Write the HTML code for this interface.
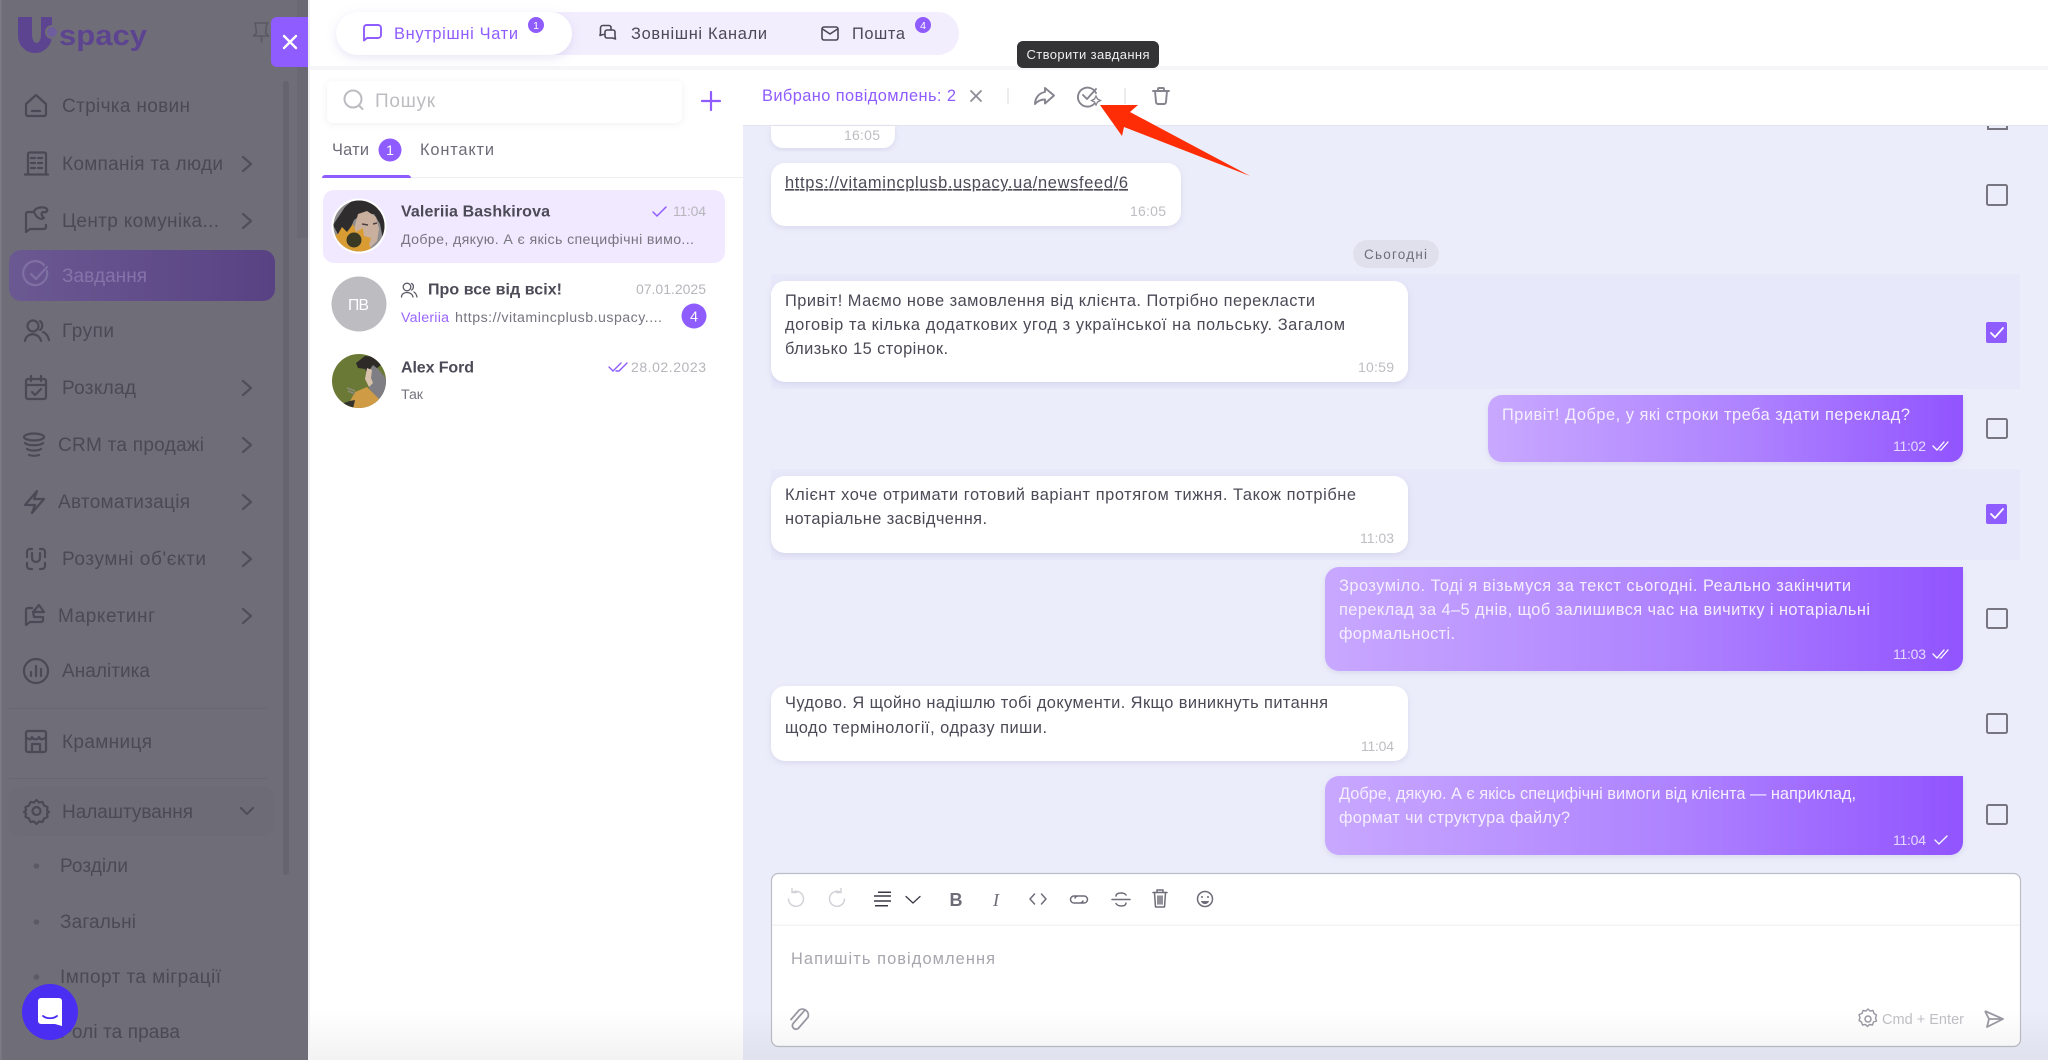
<!DOCTYPE html>
<html lang="uk"><head><meta charset="utf-8"><title>Uspacy</title>
<style>
html,body{margin:0;padding:0;width:2048px;height:1060px;overflow:hidden;background:#fff}
svg{display:block;font-family:"Liberation Sans","Noto Sans CJK JP",sans-serif}
.nav{font-size:19px;fill:#4b4955}
.ic{fill:none;stroke:#4b4955;stroke-width:2.2;stroke-linecap:round;stroke-linejoin:round}
.m{font-size:16.4px;fill:#4c4a56}
.w{font-size:16.4px;fill:#f4eeff}
.t{font-size:14px;fill:#bdbdc3}
.tw{font-size:14px;fill:#e6d9ff}
.g{fill:none;stroke:#85838e;stroke-width:1.9;stroke-linecap:round;stroke-linejoin:round}
.tb{fill:none;stroke:#6e6c78;stroke-width:1.5;stroke-linecap:round;stroke-linejoin:round}
</style></head><body>
<svg width="2048" height="1060" viewBox="0 0 2048 1060" xmlns="http://www.w3.org/2000/svg">
<defs>
<linearGradient id="act" x1="0" x2="1" y1="0" y2="0"><stop offset="0" stop-color="#6b5992"/><stop offset="1" stop-color="#594283"/></linearGradient>
<linearGradient id="out" x1="0" x2="1" y1="0" y2="0"><stop offset="0" stop-color="#c8a8ff"/><stop offset=".55" stop-color="#ae82ff"/><stop offset="1" stop-color="#9154ff"/></linearGradient>
<linearGradient id="fade" x1="0" x2="0" y1="0" y2="1"><stop offset="0" stop-color="#000" stop-opacity="0"/><stop offset="1" stop-color="#000" stop-opacity=".05"/></linearGradient>
<filter id="s1" x="-10%" y="-30%" width="120%" height="170%"><feDropShadow dx="0" dy="3" stdDeviation="5" flood-color="#8f7fd0" flood-opacity=".2"/></filter>
<filter id="s2" x="-5%" y="-10%" width="110%" height="125%"><feDropShadow dx="0" dy="2" stdDeviation="3" flood-color="#8a8cc0" flood-opacity=".2"/></filter>
<filter id="s3" x="-5%" y="-20%" width="110%" height="150%"><feDropShadow dx="0" dy="1" stdDeviation="3" flood-color="#60607a" flood-opacity=".1"/></filter>
<clipPath id="a1"><circle cx="359" cy="226" r="25.5"/></clipPath>
<clipPath id="a3"><circle cx="359" cy="381" r="27"/></clipPath>
</defs>

<!-- base -->
<rect width="2048" height="1060" fill="#fff"/>
<rect x="308" y="66" width="1740" height="4" fill="#f6f6f8"/>
<rect x="743" y="70" width="1305" height="990" fill="#ebedfa"/>
<rect x="743" y="70" width="1305" height="56" fill="#fff"/>
<rect x="743" y="125" width="1305" height="1" fill="#e4e4ee"/>
<rect x="308" y="0" width="2" height="1060" fill="#f1f1f6"/>

<!-- top tabs -->
<rect x="336" y="12" width="623" height="43" rx="21" fill="#f2eefd"/>
<rect x="336" y="12" width="236" height="43" rx="21.5" fill="#fff" filter="url(#s1)"/>
<path d="M366 25h12a3 3 0 0 1 3 3v7a3 3 0 0 1-3 3h-11l-3 2.500v-12.500a3 3 0 0 1 2-3z" fill="none" stroke="#8f5cff" stroke-width="1.900" stroke-linejoin="round"/>
<text x="394" y="39" font-size="16.4" fill="#8f5cff" textLength="124">Внутрішні Чати</text>
<circle cx="536" cy="25" r="8" fill="#8f5cff"/><text x="536" y="29" font-size="10.500" fill="#fff" text-anchor="middle">1</text>
<g fill="none" stroke="#4c4a56" stroke-width="1.600" stroke-linejoin="round" stroke-linecap="round">
<path d="M611 30v-2.500a2 2 0 0 0-2-2h-6a2.500 2.500 0 0 0-2.500 2.500v5l-.5 2.500 3-1h1"/>
<path d="M607 30h6a2 2 0 0 1 2 2v4.500l.5 2.500-3-1h-5.500a2 2 0 0 1-2-2V32a2 2 0 0 1 2-2z"/>
<rect x="822" y="27" width="16" height="13" rx="2"/><path d="M822.500 29l7.500 5 7.500-5"/>
</g>
<text x="631" y="39" font-size="16.4" fill="#4c4a56" textLength="136">Зовнішні Канали</text>
<text x="852" y="39" font-size="16.4" fill="#4c4a56" textLength="53">Пошта</text>
<circle cx="923" cy="25" r="8" fill="#8f5cff"/><text x="923" y="29" font-size="10.500" fill="#fff" text-anchor="middle">4</text>

<!-- chat list -->
<rect x="327" y="81" width="355" height="42" rx="6" fill="#fff" filter="url(#s3)"/>
<circle cx="353" cy="99" r="8.500" fill="none" stroke="#bcbcc1" stroke-width="2"/><path d="M359.500 106l3 3" stroke="#bcbcc1" stroke-width="2" stroke-linecap="round"/>
<text x="375" y="107" font-size="19" fill="#bcbcc1" textLength="60">Пошук</text>
<path d="M711 92v18M702 101h18" stroke="#8f5cff" stroke-width="2.200" stroke-linecap="round"/>
<text x="332" y="155" font-size="16.4" fill="#6e6c78" textLength="37">Чати</text>
<circle cx="390" cy="150" r="11.500" fill="#8f5cff"/><text x="390" y="155" font-size="14" fill="#fff" text-anchor="middle">1</text>
<text x="420" y="155" font-size="16.4" fill="#6e6c78" textLength="74">Контакти</text>
<rect x="322" y="177" width="421" height="1" fill="#eeeef2"/>
<path d="M322 178a3 3 0 0 1 3-3h83a3 3 0 0 1 3 3z" fill="#8f5cff"/>

<rect x="323" y="190" width="402" height="73" rx="11" fill="#f1e9ff"/>
<circle cx="359" cy="226" r="27.500" fill="#fff"/>
<g clip-path="url(#a1)">
<rect x="330" y="198" width="60" height="56" fill="#8d8c8e"/>
<path d="M333 225l12-18 8-7 30 0 8 12v30l-6 8-5-26-6-10-12 0-8 6-6 14-8 4z" fill="#2f2c2d"/>
<path d="M358 214l9-3 9 6 3 12-2 12-8 8-9-6-6-14z" fill="#c9b09e"/>
<path d="M362 224l6 1M373 224l4-1" stroke="#4d4040" stroke-width="1.600"/>
<path d="M331 236l7-2 4-7 5 5 6-8 3 8 7-4 1 8 7 2-2 7 4 6-5 5-3 6h-26l-6-6-4-10z" fill="#d99c33"/>
<circle cx="354" cy="240" r="7.500" fill="#3a3a24"/>
</g>
<text x="401" y="216.500" font-size="16" font-weight="700" fill="#4c4a56" textLength="149">Valeriia Bashkirova</text>
<path d="M653 212l4 4 9-9" fill="none" stroke="#8f5cff" stroke-width="1.500" stroke-linecap="round"/>
<text x="673" y="216" font-size="14" fill="#b6b6bc" textLength="33">11:04</text>
<text x="401" y="244" font-size="14.2" fill="#77757f" textLength="293">Добре, дякую. А є якісь специфічні вимо...</text>

<circle cx="359" cy="304" r="27.500" fill="#bdbcc1"/>
<text x="348" y="310" font-size="15.7" fill="#fff" textLength="21">ПВ</text>
<g fill="none" stroke="#5c5a66" stroke-width="1.300" stroke-linecap="round"><circle cx="407" cy="287" r="3.800"/><path d="M401.500 297c0-6 10.500-6 11.500 0M411.500 283.500c2.500 1 2.500 5 0 6.500M414 292c1.500 1 2.500 2.500 3 5"/></g>
<text x="428" y="294.500" font-size="16" font-weight="700" fill="#4c4a56" textLength="134">Про все від всіх!</text>
<text x="636" y="294" font-size="14" fill="#b6b6bc" textLength="70">07.01.2025</text>
<text x="401" y="322" font-size="14.2" fill="#9a66ff" textLength="48">Valeriia</text>
<text x="455" y="322" font-size="14.2" fill="#77757f" textLength="207">https://vitamincplusb.uspacy....</text>
<circle cx="694" cy="316" r="12.500" fill="#8f5cff"/><text x="694" y="321.500" font-size="14.5" fill="#fff" text-anchor="middle">4</text>

<circle cx="359" cy="381" r="27" fill="#6a7936"/>
<g clip-path="url(#a3)">
<path d="M356 363l9-7 13 1 3 8-4 3-4 10-5-3-3-6-7-1z" fill="#2d2a28"/>
<path d="M368 372l5-7 5 4 6 7 5 10 1 14-9 8-7-6-5-14z" fill="#7e7e84"/>
<path d="M367 368l5 2-1 8 2 5-4 4-4-8z" fill="#d9c2ab"/>
<path d="M355 392l12-5 6 6 6 6 6 6-2 8h-36l2-10z" fill="#cf9b45"/>
<path d="M344 403l6-2 5-1-3 13h-12z" fill="#33322c"/>
<path d="M347 388l8 3M348 391l7 3" stroke="#8c8c78" stroke-width="1.500"/>
</g>
<text x="401" y="372.500" font-size="16" font-weight="700" fill="#4c4a56" textLength="73">Alex Ford</text>
<path d="M609 367l4 4 8-8M616 371l3 0 8-8" fill="none" stroke="#8f5cff" stroke-width="1.400" stroke-linecap="round"/>
<text x="631" y="372" font-size="14" fill="#b6b6bc" textLength="75">28.02.2023</text>
<text x="401" y="399" font-size="14.2" fill="#77757f" textLength="22">Так</text>

<!-- chat header -->
<text x="762" y="101" font-size="16.4" fill="#8f5cff" textLength="194">Вибрано повідомлень: 2</text>
<path d="M971 91l10 10M981 91l-10 10" stroke="#8d8b95" stroke-width="1.800" stroke-linecap="round"/>
<rect x="1007" y="88" width="2" height="16" fill="#ececef"/>
<path class="g" d="M1045 88l9 7.500-9 8v-4c-4 0-7 1-10 4.500 0-6 4-11 10-12z"/>
<path class="g" d="M1096 93a9.500 9.500 0 1 0-2 11M1083 95l4 4 9-10"/>
<path d="M1096 96l1.500 3 3 1.500-3 1.500-1.500 3-1.500-3-3-1.500 3-1.500z" fill="none" stroke="#85838e" stroke-width="1.300"/>
<rect x="1124" y="88" width="2" height="16" fill="#ececef"/>
<path class="g" d="M1153 91h16M1158 91v-2a1 1 0 0 1 1-1h4a1 1 0 0 1 1 1v2M1155 91l1 11a2 2 0 0 0 2 2h6a2 2 0 0 0 2-2l1-11"/>

<!-- messages -->
<path d="M771 126h124v10a12 12 0 0 1-12 12H783a12 12 0 0 1-12-12z" fill="#fff" filter="url(#s2)"/>
<text x="844" y="140" class="t" textLength="36">16:05</text>
<path d="M1988 126v3h19v-3" fill="none" stroke="#77757f" stroke-width="2"/>

<rect x="771" y="163" width="410" height="63" rx="14" fill="#fff" filter="url(#s2)"/>
<text x="785" y="188" class="m" textLength="343" text-decoration="underline">https://vitamincplusb.uspacy.ua/newsfeed/6</text>
<text x="1130" y="216" class="t" textLength="36">16:05</text>
<rect x="1987" y="185" width="20" height="20" rx="1.500" fill="none" stroke="#77757f" stroke-width="2"/>

<rect x="1353" y="240" width="86" height="28" rx="14" fill="#dfe0ec"/>
<text x="1364" y="259" font-size="13.5" fill="#6e6c78" textLength="63">Сьогодні</text>

<rect x="771" y="274" width="1249" height="115" fill="#e7e8f9"/>
<rect x="771" y="281" width="637" height="101" rx="14" fill="#fff" filter="url(#s2)"/>
<text x="785" y="306" class="m" textLength="530">Привіт! Маємо нове замовлення від клієнта. Потрібно перекласти</text>
<text x="785" y="330" class="m" textLength="560">договір та кілька додаткових угод з української на польську. Загалом</text>
<text x="785" y="354" class="m" textLength="163">близько 15 сторінок.</text>
<text x="1358" y="372" class="t" textLength="36">10:59</text>
<rect x="1986" y="322" width="21" height="21" rx="2" fill="#8f5cff"/><path d="M1991 333l4 4 8-9" fill="none" stroke="#fff" stroke-width="1.800" stroke-linecap="round" stroke-linejoin="round"/>

<path d="M1502 395h461v54a13 13 0 0 1-13 13h-448a14 14 0 0 1-14-14v-39a14 14 0 0 1 14-14z" fill="url(#out)" filter="url(#s2)"/>
<text x="1502" y="420" class="w" textLength="408">Привіт! Добре, у які строки треба здати переклад?</text>
<text x="1893" y="451" class="tw" textLength="33">11:02</text>
<path d="M1933 446l4 4 7-8M1940 450l1 0 7-8" fill="none" stroke="#fff" stroke-width="1.300" stroke-linecap="round"/>
<rect x="1987" y="419" width="20" height="19" rx="1.500" fill="none" stroke="#77757f" stroke-width="2"/>

<rect x="771" y="469" width="1249" height="91" fill="#e7e8f9"/>
<rect x="771" y="476" width="637" height="77" rx="14" fill="#fff" filter="url(#s2)"/>
<text x="785" y="500" class="m" textLength="571">Клієнт хоче отримати готовий варіант протягом тижня. Також потрібне</text>
<text x="785" y="524" class="m" textLength="202">нотаріальне засвідчення.</text>
<text x="1360" y="543" class="t" textLength="34">11:03</text>
<rect x="1986" y="504" width="21" height="20" rx="2" fill="#8f5cff"/><path d="M1991 514l4 4 8-9" fill="none" stroke="#fff" stroke-width="1.800" stroke-linecap="round" stroke-linejoin="round"/>

<path d="M1339 567h624v91a13 13 0 0 1-13 13h-611a14 14 0 0 1-14-14v-76a14 14 0 0 1 14-14z" fill="url(#out)" filter="url(#s2)"/>
<text x="1339" y="591" class="w" textLength="512">Зрозуміло. Тоді я візьмуся за текст сьогодні. Реально закінчити</text>
<text x="1339" y="615" class="w" textLength="531">переклад за 4–5 днів, щоб залишився час на вичитку і нотаріальні</text>
<text x="1339" y="639" class="w" textLength="116">формальності.</text>
<text x="1893" y="659" class="tw" textLength="33">11:03</text>
<path d="M1933 654l4 4 7-8M1940 658l1 0 7-8" fill="none" stroke="#fff" stroke-width="1.300" stroke-linecap="round"/>
<rect x="1987" y="609" width="20" height="19" rx="1.500" fill="none" stroke="#77757f" stroke-width="2"/>

<rect x="771" y="686" width="637" height="75" rx="14" fill="#fff" filter="url(#s2)"/>
<text x="785" y="708" class="m" textLength="543">Чудово. Я щойно надішлю тобі документи. Якщо виникнуть питання</text>
<text x="785" y="733" class="m" textLength="262">щодо термінології, одразу пиши.</text>
<text x="1361" y="751" class="t" textLength="33">11:04</text>
<rect x="1987" y="714" width="20" height="19" rx="1.500" fill="none" stroke="#77757f" stroke-width="2"/>

<path d="M1339 776h624v66a13 13 0 0 1-13 13h-611a14 14 0 0 1-14-14v-51a14 14 0 0 1 14-14z" fill="url(#out)" filter="url(#s2)"/>
<text x="1339" y="799" class="w" textLength="517">Добре, дякую. А є якісь специфічні вимоги від клієнта — наприклад,</text>
<text x="1339" y="823" class="w" textLength="231">формат чи структура файлу?</text>
<text x="1893" y="845" class="tw" textLength="33">11:04</text>
<path d="M1935 840l4 4 8-8" fill="none" stroke="#fff" stroke-width="1.300" stroke-linecap="round"/>
<rect x="1987" y="805" width="20" height="19" rx="1.500" fill="none" stroke="#77757f" stroke-width="2"/>

<!-- composer -->
<rect x="771.500" y="873.500" width="1249" height="173" rx="7" fill="#fff" stroke="#bdbdc5" stroke-width="1.200"/>
<rect x="772" y="924.500" width="1248" height="1.500" fill="#f3f3f6"/>
<g fill="none" stroke="#d2d2d8" stroke-width="1.500" stroke-linecap="round" stroke-linejoin="round">
<path d="M792 892.500A7.500 7.500 0 1 1 788.500 899M792 888.500v4h4.500"/>
<path d="M841 892.500A7.500 7.500 0 1 0 844.500 899M841 888.500v4h-4.500"/>
</g>
<path d="M878 892.200h13M874 896h17M874 901h17M875 905.700h13" stroke="#3a3844" stroke-width="1.500"/>
<path d="M906 896.500l7 6.500 7-6.500" fill="none" stroke="#3a3844" stroke-width="1.300" stroke-linecap="round"/>
<text x="949.500" y="906" font-size="18" font-weight="700" fill="#6e6c78">B</text>
<text x="993" y="906" font-size="18" font-style="italic" font-family="Liberation Serif" fill="#6e6c78">I</text>
<path class="tb" d="M1034.500 894l-4.500 5 4.500 5M1041.500 894l4.500 5-4.500 5"/>
<path class="tb" d="M1078 896h-4a3.500 3.500 0 0 0 0 7h6a3.500 3.500 0 0 0 3-2M1081 903h3a3.500 3.500 0 0 0 0-7h-6a3.500 3.500 0 0 0-3 2"/>
<path class="tb" d="M1112 899.500h18M1126 895c-1-1.500-3-2-5-2-3 0-5 1-5 3M1116 903.500c1 1.500 3 2.500 5 2.500 3 0 5-1 5-3"/>
<path class="tb" d="M1153 892.500h14M1157 892.500v-2.500h6v2.500M1154.500 893l1 14h9l1-14M1158 896v8M1160 896v8M1162 896v8"/>
<circle class="tb" cx="1205" cy="899" r="7.500"/>
<path d="M1201 901c1 4 7 4 8 0z" fill="#6e6c78"/><circle cx="1202" cy="897" r="1" fill="#6e6c78"/><circle cx="1208" cy="897" r="1" fill="#6e6c78"/>
<text x="791" y="964" font-size="16.4" fill="#a6a6ae" textLength="204">Напишіть повідомлення</text>
<path d="M805 1011l-12 12a3.500 3.500 0 0 0 5 5l10-10a6 6 0 0 0-8-8l-9 9" fill="none" stroke="#9a98a2" stroke-width="1.800" stroke-linecap="round" transform="rotate(-4 798 1019)"/>
<circle cx="1868" cy="1019" r="3" fill="none" stroke="#9a98a2" stroke-width="1.500"/>
<path d="M1868 1011l2 2 3-.5 1 3 2.500 1.500-1 3 1 3-3 1-1 3-3-.5-2 2-2-2-3 .5-1-3-2.500-1.500 1-3-1-3 3-1 1-3 3 .5z" fill="none" stroke="#9a98a2" stroke-width="1.400" stroke-linejoin="round" transform="translate(0 -2)"/>
<text x="1882" y="1024" font-size="14.5" fill="#c0c0c6" textLength="82">Cmd + Enter</text>
<path d="M1985 1011l18 8-16 8 2-8h14M1985 1011l4 8" fill="none" stroke="#9a98a2" stroke-width="1.800" stroke-linejoin="round"/>

<rect x="310" y="1010" width="1738" height="50" fill="url(#fade)"/>

<!-- tooltip -->
<rect x="1017" y="41" width="142" height="27" rx="6" fill="#333235"/>
<text x="1026.500" y="59" font-size="13" fill="#eeeeee" textLength="123">Створити завдання</text>

<!-- arrow -->
<path d="M1100 105L1138 105L1130 112L1250 176L1124 127L1122 136z" fill="#ff2d05"/>

<!-- sidebar -->
<rect x="0" y="0" width="308" height="1060" fill="#6f6d78"/>
<rect x="0" y="0" width="1.500" height="1060" fill="#7c7a85"/>
<rect x="297" y="0" width="11" height="238" fill="#6a6873"/>
<rect x="283" y="81" width="6" height="794" rx="3" fill="#66646f"/>

<!-- logo -->
<path d="M18 17H32V35A4.500 8 0 0 0 41 35V17H52V36A17 17 0 0 1 18 36Z" fill="#5d4490"/>
<circle cx="52" cy="32" r="7" fill="#6f6d78"/>
<circle cx="52" cy="32" r="5" fill="#6f5e9d"/>
<text x="59" y="45" font-size="29" font-weight="700" fill="#5d4490" textLength="88" lengthAdjust="spacingAndGlyphs">spacy</text>
<path d="M255 23h13l-1.500 2-1 8 3 3h-15l3-3-1-8zM261.500 36v6" fill="none" stroke="#5a5863" stroke-width="1.600" stroke-linejoin="round" stroke-linecap="round"/>

<!-- close -->
<path d="M277 17h31v50h-31a6 6 0 0 1-6-6V23a6 6 0 0 1 6-6z" fill="#8f5cff"/>
<path d="M284 36l12 12M296 36l-12 12" stroke="#fff" stroke-width="2.400" stroke-linecap="round"/>

<!-- active -->
<rect x="9" y="250" width="266" height="51" rx="12" fill="url(#act)"/>
<rect x="9" y="787" width="266" height="49" rx="12" fill="#6d6b76"/>
<rect x="9" y="708" width="258" height="1" fill="#686671"/>
<rect x="9" y="778" width="258" height="1" fill="#686671"/>

<!-- nav labels -->
<g class="nav">
<text x="62" y="112" textLength="128">Стрічка новин</text>
<text x="62" y="170" textLength="161">Компанія та люди</text>
<text x="62" y="227" textLength="157">Центр комуніка...</text>
<text x="62" y="282" textLength="85" style="fill:#8573a9">Завдання</text>
<text x="62" y="337" textLength="52">Групи</text>
<text x="62" y="394" textLength="74">Розклад</text>
<text x="58" y="451" textLength="146">CRM та продажі</text>
<text x="58" y="508" textLength="132">Автоматизація</text>
<text x="62" y="565" textLength="144">Розумні об'єкти</text>
<text x="58" y="622" textLength="97">Маркетинг</text>
<text x="62" y="677" textLength="88">Аналітика</text>
<text x="62" y="748" textLength="90">Крамниця</text>
<text x="62" y="818" textLength="131">Налаштування</text>
<text x="60" y="872" textLength="68">Розділи</text>
<text x="60" y="928" textLength="76">Загальні</text>
<text x="60" y="983" textLength="161">Імпорт та міграції</text>
<text x="60" y="1038" textLength="120">Ролі та права</text>
</g>

<!-- nav icons -->
<g class="ic">
<path d="M26 104l10-9 10 9v10a2 2 0 0 1-2 2H28a2 2 0 0 1-2-2zM32 111h8"/>
<path d="M28 174v-20a1.500 1.500 0 0 1 1.500-1.500h15a1.500 1.500 0 0 1 1.500 1.500v20M25 174.500h23M31 158h4M38 158h4M31 163h4M38 163h4M31 168h4M38 168h4"/>
<path d="M26 232v-18a2 2 0 0 1 2-2h6M26 232l4-3h14a2 2 0 0 0 2-2v-2M38 208c3-1 7-1 9 1 1 2-1 4-4 3-2 1-2 3 1 6-3 2-7 0-9-4-2-3 0-5 3-6z"/>
<path d="M47 271a12 12 0 1 1-3-6M31 274l5 5 11-12" style="stroke:#7f70a3"/>
<circle cx="33" cy="326" r="5.500"/><path d="M25 341c1-9 14-9 16 0M40 321c3 2 3 7 0 9M43 332c3 1 5 4 6 8"/>
<path d="M28 379h16a2 2 0 0 1 2 2v16a2 2 0 0 1-2 2H28a2 2 0 0 1-2-2v-16a2 2 0 0 1 2-2zM26 385h20M31 376v5M41 376v5M32 392l3 3 6-6"/>
<ellipse cx="34" cy="437" rx="10" ry="3.500"/><path d="M25 443c3 3 15 3 18 0M27 449c3 2 11 2 14 0M29 455c3 1 7 1 10 0"/>
<path d="M37 491l-12 14h10l-3 8 12-14H34z"/>
<path d="M27 557v-5a3 3 0 0 1 3-3h2M45 557v-5a3 3 0 0 0-3-3h-2M27 563v3a3 3 0 0 0 3 3h2M45 563v3a3 3 0 0 1-3 3h-2M32 553v5a4 4 0 0 0 8 0v-5"/>
<path d="M26 625v-15a2 2 0 0 1 2-2h4M26 625l4-3h11a2 2 0 0 0 2-2v-3M33 612l6-7 5 7zM33 612l1 5h7"/>
<circle cx="36" cy="671" r="12"/><path d="M31 672v4M36 666v10M41 669v7"/>
<path d="M28 731h16a2 2 0 0 1 2 2v17a2 2 0 0 1-2 2H28a2 2 0 0 1-2-2v-17a2 2 0 0 1 2-2zM26 737c3 3 5 3 6 0 1 3 6 3 7 0 1 3 4 3 7 0M32 752v-8h8v8"/>
<circle cx="36.500" cy="811" r="4"/><path d="M36.500 800l2.500 2.500 3.500-.5 1.500 3.500 3.500 1.500-.5 3.500 2 1.500-2 1.500.5 3.500-3.500 1.500-1.500 3.500-3.500-.5-2.500 2.500-2.500-2.500-3.500.5-1.500-3.500-3.500-1.500.5-3.500-2-1.500 2-1.500-.5-3.500 3.500-1.500 1.500-3.500 3.500.5z"/>
</g>
<g fill="none" stroke="#4b4955" stroke-width="2.200" stroke-linecap="round" stroke-linejoin="round" opacity=".85">
<path d="M243 157l8 7-8 7M243 214l8 7-8 7M243 381l8 7-8 7M243 438l8 7-8 7M243 495l8 7-8 7M243 552l8 7-8 7M243 609l8 7-8 7M241 808l6 6 6-6"/>
</g>
<g fill="#5c5a65"><circle cx="36.500" cy="866" r="2.800"/><circle cx="36.500" cy="922" r="2.800"/><circle cx="36.500" cy="977" r="2.800"/></g>

<!-- widget -->
<circle cx="50" cy="1012" r="28" fill="#4a2ef2"/>
<path d="M41 998h18a3 3 0 0 1 3 3v25l-7-2H41a3 3 0 0 1-3-3v-20a3 3 0 0 1 3-3z" fill="#fff"/>
<path d="M43 1016c4 3 10 3 14 0" fill="none" stroke="#4a2ef2" stroke-width="1.800" stroke-linecap="round"/>
</svg>
</body></html>
